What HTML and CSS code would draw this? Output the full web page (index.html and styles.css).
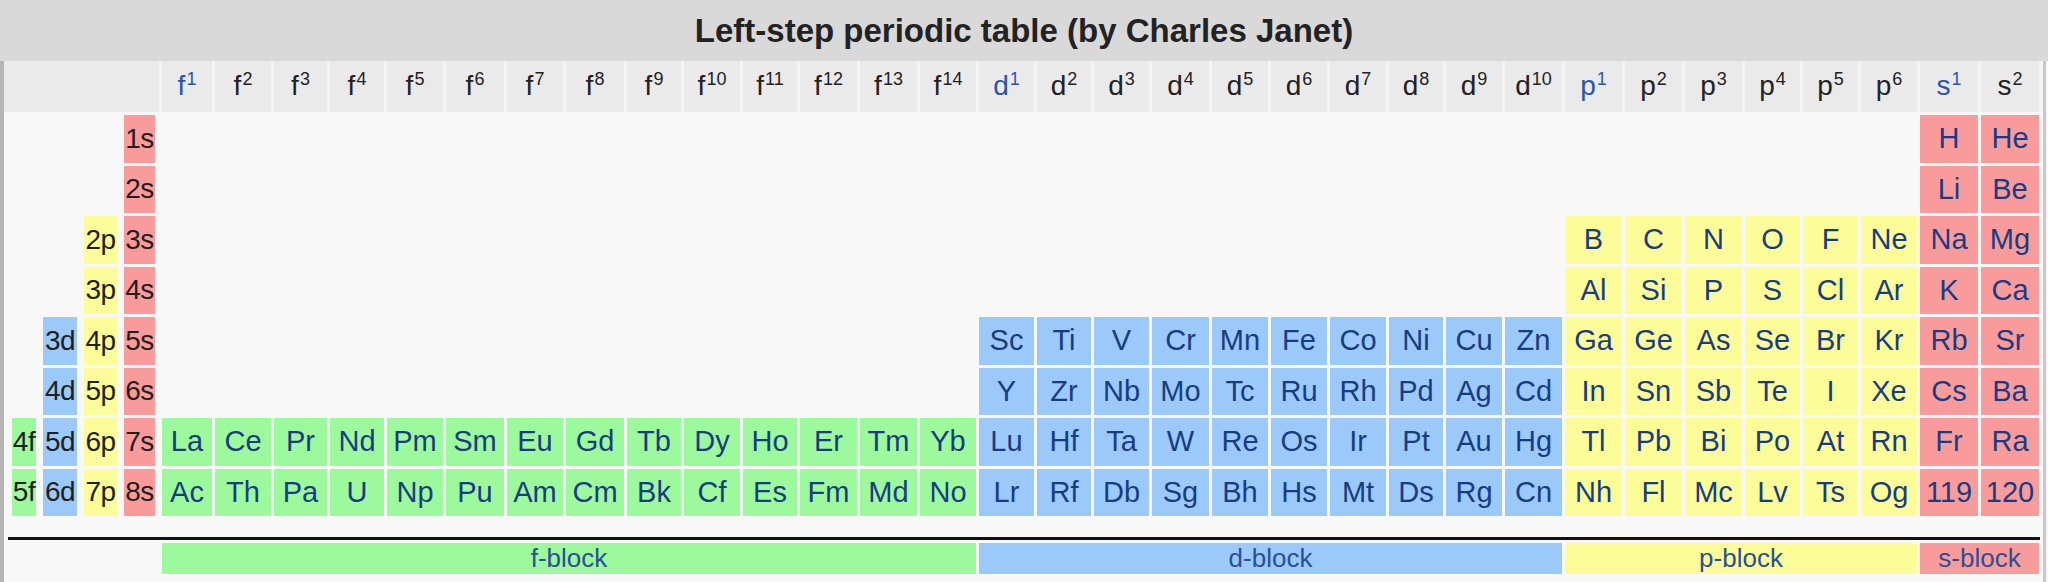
FILE: index.html
```html
<!DOCTYPE html>
<html lang="en">
<head>
<meta charset="utf-8">
<title>Left-step periodic table</title>
<link rel="stylesheet" href="styles.css">
</head>
<body>
<div class="titlebar">Left-step periodic table (by Charles Janet)</div>
<div class="panel">
  <div class="head grid">
    <div class="hcell corner"></div>
    <div class="hcell lead">f<sup>1</sup></div>
    <div class="hcell">f<sup>2</sup></div>
    <div class="hcell">f<sup>3</sup></div>
    <div class="hcell">f<sup>4</sup></div>
    <div class="hcell">f<sup>5</sup></div>
    <div class="hcell">f<sup>6</sup></div>
    <div class="hcell">f<sup>7</sup></div>
    <div class="hcell">f<sup>8</sup></div>
    <div class="hcell">f<sup>9</sup></div>
    <div class="hcell">f<sup>10</sup></div>
    <div class="hcell">f<sup>11</sup></div>
    <div class="hcell">f<sup>12</sup></div>
    <div class="hcell">f<sup>13</sup></div>
    <div class="hcell">f<sup>14</sup></div>
    <div class="hcell lead">d<sup>1</sup></div>
    <div class="hcell">d<sup>2</sup></div>
    <div class="hcell">d<sup>3</sup></div>
    <div class="hcell">d<sup>4</sup></div>
    <div class="hcell">d<sup>5</sup></div>
    <div class="hcell">d<sup>6</sup></div>
    <div class="hcell">d<sup>7</sup></div>
    <div class="hcell">d<sup>8</sup></div>
    <div class="hcell">d<sup>9</sup></div>
    <div class="hcell">d<sup>10</sup></div>
    <div class="hcell lead">p<sup>1</sup></div>
    <div class="hcell">p<sup>2</sup></div>
    <div class="hcell">p<sup>3</sup></div>
    <div class="hcell">p<sup>4</sup></div>
    <div class="hcell">p<sup>5</sup></div>
    <div class="hcell">p<sup>6</sup></div>
    <div class="hcell lead">s<sup>1</sup></div>
    <div class="hcell">s<sup>2</sup></div>
  </div>

  <div class="body grid">
    <!-- row 1 -->
    <div class="labels"><span class="lab"></span><span class="lab"></span><span class="lab"></span><span class="lab s">1s</span></div>
    <div class="skip30"></div>
    <div class="el s">H</div><div class="el s">He</div>
    <!-- row 2 -->
    <div class="labels"><span class="lab"></span><span class="lab"></span><span class="lab"></span><span class="lab s">2s</span></div>
    <div class="skip30"></div>
    <div class="el s">Li</div><div class="el s">Be</div>
    <!-- row 3 -->
    <div class="labels"><span class="lab"></span><span class="lab"></span><span class="lab p">2p</span><span class="lab s">3s</span></div>
    <div class="skip24"></div>
    <div class="el p">B</div><div class="el p">C</div><div class="el p">N</div><div class="el p">O</div><div class="el p">F</div><div class="el p">Ne</div>
    <div class="el s">Na</div><div class="el s">Mg</div>
    <!-- row 4 -->
    <div class="labels"><span class="lab"></span><span class="lab"></span><span class="lab p">3p</span><span class="lab s">4s</span></div>
    <div class="skip24"></div>
    <div class="el p">Al</div><div class="el p">Si</div><div class="el p">P</div><div class="el p">S</div><div class="el p">Cl</div><div class="el p">Ar</div>
    <div class="el s">K</div><div class="el s">Ca</div>
    <!-- row 5 -->
    <div class="labels"><span class="lab"></span><span class="lab d">3d</span><span class="lab p">4p</span><span class="lab s">5s</span></div>
    <div class="skip14"></div>
    <div class="el d">Sc</div><div class="el d">Ti</div><div class="el d">V</div><div class="el d">Cr</div><div class="el d">Mn</div><div class="el d">Fe</div><div class="el d">Co</div><div class="el d">Ni</div><div class="el d">Cu</div><div class="el d">Zn</div>
    <div class="el p">Ga</div><div class="el p">Ge</div><div class="el p">As</div><div class="el p">Se</div><div class="el p">Br</div><div class="el p">Kr</div>
    <div class="el s">Rb</div><div class="el s">Sr</div>
    <!-- row 6 -->
    <div class="labels"><span class="lab"></span><span class="lab d">4d</span><span class="lab p">5p</span><span class="lab s">6s</span></div>
    <div class="skip14"></div>
    <div class="el d">Y</div><div class="el d">Zr</div><div class="el d">Nb</div><div class="el d">Mo</div><div class="el d">Tc</div><div class="el d">Ru</div><div class="el d">Rh</div><div class="el d">Pd</div><div class="el d">Ag</div><div class="el d">Cd</div>
    <div class="el p">In</div><div class="el p">Sn</div><div class="el p">Sb</div><div class="el p">Te</div><div class="el p">I</div><div class="el p">Xe</div>
    <div class="el s">Cs</div><div class="el s">Ba</div>
    <!-- row 7 -->
    <div class="labels"><span class="lab f">4f</span><span class="lab d">5d</span><span class="lab p">6p</span><span class="lab s">7s</span></div>
    <div class="el f">La</div><div class="el f">Ce</div><div class="el f">Pr</div><div class="el f">Nd</div><div class="el f">Pm</div><div class="el f">Sm</div><div class="el f">Eu</div><div class="el f">Gd</div><div class="el f">Tb</div><div class="el f">Dy</div><div class="el f">Ho</div><div class="el f">Er</div><div class="el f">Tm</div><div class="el f">Yb</div>
    <div class="el d">Lu</div><div class="el d">Hf</div><div class="el d">Ta</div><div class="el d">W</div><div class="el d">Re</div><div class="el d">Os</div><div class="el d">Ir</div><div class="el d">Pt</div><div class="el d">Au</div><div class="el d">Hg</div>
    <div class="el p">Tl</div><div class="el p">Pb</div><div class="el p">Bi</div><div class="el p">Po</div><div class="el p">At</div><div class="el p">Rn</div>
    <div class="el s">Fr</div><div class="el s">Ra</div>
    <!-- row 8 -->
    <div class="labels"><span class="lab f">5f</span><span class="lab d">6d</span><span class="lab p">7p</span><span class="lab s">8s</span></div>
    <div class="el f">Ac</div><div class="el f">Th</div><div class="el f">Pa</div><div class="el f">U</div><div class="el f">Np</div><div class="el f">Pu</div><div class="el f">Am</div><div class="el f">Cm</div><div class="el f">Bk</div><div class="el f">Cf</div><div class="el f">Es</div><div class="el f">Fm</div><div class="el f">Md</div><div class="el f">No</div>
    <div class="el d">Lr</div><div class="el d">Rf</div><div class="el d">Db</div><div class="el d">Sg</div><div class="el d">Bh</div><div class="el d">Hs</div><div class="el d">Mt</div><div class="el d">Ds</div><div class="el d">Rg</div><div class="el d">Cn</div>
    <div class="el p">Nh</div><div class="el p">Fl</div><div class="el p">Mc</div><div class="el p">Lv</div><div class="el p">Ts</div><div class="el p">Og</div>
    <div class="el s">119</div><div class="el s">120</div>
  </div>

  <div class="rule"></div>

  <div class="legend grid">
    <div class="leg-spacer"></div>
    <div class="leg f span14">f-block</div>
    <div class="leg d span10">d-block</div>
    <div class="leg p span6">p-block</div>
    <div class="leg s span2">s-block</div>
  </div>
</div>
</body>
</html>
```

FILE: styles.css
```css
html, body {
  margin: 0;
  padding: 0;
}

body {
  width: 2048px;
  height: 582px;
  overflow: hidden;
  background: #f8f8f8;
  font-family: "Liberation Sans", Arial, sans-serif;
}

.titlebar {
  height: 61px;
  background: #d9d9d9;
  display: flex;
  align-items: center;
  justify-content: center;
  font-weight: bold;
  font-size: 33px;
  color: #222;
}

.panel {
  height: 521px;
  box-sizing: border-box;
  margin-right: 2px;
  border-left: 4px solid #b6b6b6;
  border-right: 3px solid #c8c8c8;
  background: #f8f8f8;
}

.grid {
  display: grid;
  grid-template-columns:
    155px
    50px 56px 53px 54px 56px 58px 56px 58px 54px 56px 54px 57px 57px 56px
    55px 54px 55px 57px 56px 56px 56px 54px 56px 57px
    57px 57px 57px 55px 55px 56px
    58px 58px;
  column-gap: 3px;
}

/* header row */
.head {
  height: 51px;
  background: #f4f4f4;
}

.hcell {
  background: #eaeaea;
  text-align: center;
  white-space: nowrap;
  font-size: 28px;
  line-height: 50px;
  color: #222;
}

.hcell sup {
  font-size: 18px;
  line-height: 0;
  vertical-align: 10px;
  margin-left: 1px;
}

.hcell.lead {
  color: #2a55aa;
}

/* element body */
.body {
  padding-top: 3px;
  grid-template-rows: repeat(8, 47.5px);
  row-gap: 3px;
}

.skip30 { grid-column: span 30; }
.skip24 { grid-column: span 24; }
.skip14 { grid-column: span 14; }

.labels {
  display: grid;
  grid-template-columns: 24px 34px 33px 31px;
  column-gap: 7px;
  justify-content: end;
  padding-right: 4px;
}

.lab {
  display: flex;
  align-items: center;
  justify-content: center;
  font-size: 28px;
  letter-spacing: -0.5px;
  color: #1f1f1f;
}

.el {
  display: flex;
  align-items: center;
  justify-content: center;
  font-size: 29px;
  color: #183c84;
}

.s { background: #fa9b9b; }
.p { background: #fcfc99; }
.d { background: #9bc9f9; }
.f { background: #9cf99c; }

/* bottom rule and legend */
.rule {
  height: 3px;
  margin: 21px 3px 0 4px;
  background: #111;
}

.legend {
  margin-top: 3px;
  height: 28px;
}

.span14 { grid-column: span 14; }
.span10 { grid-column: span 10; }
.span6 { grid-column: span 6; }
.span2 { grid-column: span 2; }

.leg {
  display: flex;
  align-items: center;
  justify-content: center;
  font-size: 26px;
  color: #2b4f96;
}
```
